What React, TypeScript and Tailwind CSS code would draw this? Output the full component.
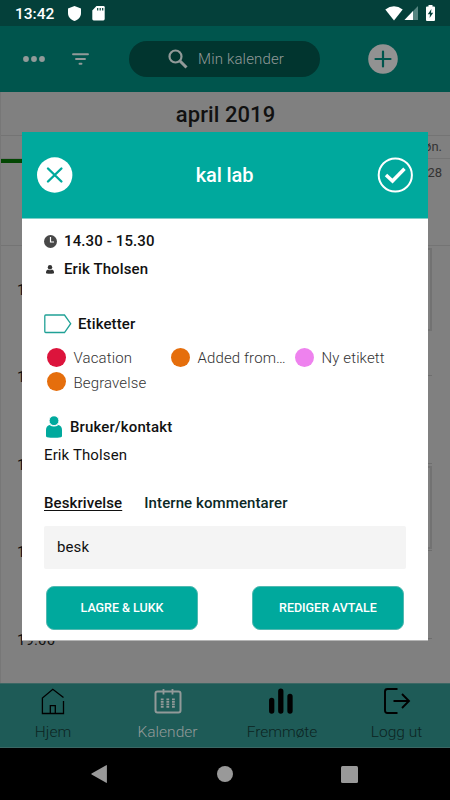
import React from "react";

const labels = [
    { name: "Vacation", color: "bg-[#dc143c]" },
    { name: "Added from…", color: "bg-[#e56e0c]" },
    { name: "Ny etikett", color: "bg-[#ee82ee]" },
    { name: "Begravelse", color: "bg-[#e56e0c]" },
];

const hours = ["15.00", "16.00", "17.00", "18.00", "19.00"];

const StatusBar = () => {
    return (
        <div className="flex h-[26px] items-center bg-[#04403a] pl-[15px] pr-[15px] text-white">
            <span className="w-[53px] text-[15.5px] font-medium leading-none pt-[3px] whitespace-nowrap">
                13:42
            </span>
            <svg width="13" height="15" viewBox="0 0 13 15" fill="currentColor">
                <path d="M6.5 0 13 2.4V7c0 3.800-2.700 6.800-6.500 8C2.700 13.800 0 10.800 0 7V2.400Z" />
            </svg>
            <svg
                className="ml-[11px]"
                width="13"
                height="15"
                viewBox="0 0 13 15"
            >
                <path
                    d="M4.500 0H11.500Q12.700 0 12.700 1.200V13Q12.700 14.400 11.300 14.400H1.700Q.3 14.400 .3 13V4.500Z"
                    fill="#fff"
                />
                <path d="M5.700 2v2.600M8.200 2v2.600M10.700 2v2.600" stroke="#04403a" strokeWidth="1.200" />
            </svg>
            <div className="ml-auto flex items-center">
                <svg width="18" height="15" viewBox="0 0 18 15" fill="currentColor">
                    <path d="M.3 3.500Q9-3 17.700 3.500L9 14.500Z" />
                </svg>
                <svg className="ml-[1px]" width="15" height="14" viewBox="0 0 15 14">
                    <path d="M14 0V14H.5Z" fill="#568580" />
                    <path d="M9 5V14H.5Z" fill="#fff" />
                </svg>
                <svg className="ml-[7px]" width="9" height="16" viewBox="0 0 9 16">
                    <path
                        d="M2.500 1.500V0h4v1.500H8q1 0 1 1V15q0 1-1 1H1q-1 0-1-1V2.500q0-1 1-1Z"
                        fill="#fff"
                    />
                    <path d="M5.400 4 1.800 9.300H4L3.600 13 7.200 7.800H5Z" fill="#04403a" />
                </svg>
            </div>
        </div>
    );
};

const TopBar = () => {
    return (
        <div className="flex h-[66px] items-center bg-[#00554d] text-[#929a99]">
            <svg className="ml-[23px]" width="22" height="6" viewBox="0 0 22 6" fill="currentColor">
                <circle cx="3" cy="3" r="2.900" />
                <circle cx="11" cy="3" r="2.900" />
                <circle cx="19" cy="3" r="2.900" />
            </svg>
            <svg
                className="ml-[27px]"
                width="17"
                height="12"
                viewBox="0 0 17 12"
                stroke="currentColor"
                strokeWidth="1.900"
                strokeLinecap="round"
            >
                <path d="M1 1.300H16M4 6H13M7.500 10.700H9.500" />
            </svg>
            <div className="ml-[40px] flex h-[36px] w-[191px] items-center rounded-full bg-[#01352f]">
                <svg
                    className="ml-[39px]"
                    width="20"
                    height="20"
                    viewBox="0 0 20 20"
                    fill="none"
                    stroke="currentColor"
                >
                    <circle cx="7.500" cy="7.500" r="6" strokeWidth="2.200" />
                    <path d="M12 12 18.500 18.500" strokeWidth="3" />
                </svg>
                <span className="ml-[10px] pt-[1px] text-[15px] font-light tracking-[0.16px] whitespace-nowrap">
                    Min kalender
                </span>
            </div>
            <svg className="ml-[48px]" width="30" height="30" viewBox="0 0 30 30">
                <circle cx="15" cy="15" r="14.800" fill="#929292" />
                <path
                    d="M15 7.500V22.500M7.500 15H22.500"
                    stroke="#00554d"
                    strokeWidth="2.200"
                    strokeLinecap="round"
                />
            </svg>
        </div>
    );
};

const CalendarView = () => {
    return (
        <div className="h-[591px] overflow-hidden border-l border-[#777] bg-[#808080] text-[#111]">
            <h1 className="h-[43px] pt-[6px] text-center text-[22px] font-medium leading-[34px] tracking-[0.08px]">
                april 2019
            </h1>
            <div className="h-[24px] border-y border-[#747474] pr-[8px] text-right text-[13px] leading-[22px] text-[#333]">
                søn.
            </div>
            <div className="h-[87px] border-b border-[#747474]">
                <div className="h-[4px] w-[60px] bg-[#034703]" />
                <div className="-mt-[1px] pr-[8px] text-right text-[13px] leading-[22px] text-[#333]">
                    28
                </div>
            </div>
            <div className="mr-[18px] ml-[16px] pt-[33.5px]">
                {hours.map((hour) => (
                    <div key={hour} className="flex h-[87.5px]">
                        <span className="h-[20px] w-[44px] text-[15px] leading-[20px] tracking-[0.1px]">
                            {hour}
                        </span>
                        <div className="relative mt-[8px] flex-1 border-t border-[#6e6e6e]">
                            {(hour === "15.00" || hour === "17.00") && (
                                <div
                                    className={
                                        hour === "15.00"
                                            ? "absolute -top-[41px] right-0 h-[83px] w-[60px] border-2 border-[#727272] bg-[#808080]"
                                            : "absolute top-[2px] right-0 h-[83px] w-[60px] border-2 border-[#727272] bg-[#808080]"
                                    }
                                />
                            )}
                        </div>
                    </div>
                ))}
            </div>
        </div>
    );
};

const TabBar = () => {
    return (
        <div className="flex h-[65px] border-y border-[#3b6764] bg-[#1e5b57] text-[15.500px] font-light leading-[20px] text-[#0c2422]">
            <div className="flex w-[106px] shrink-0 flex-col items-center">
                <svg
                    className="mt-[4px]"
                    width="24"
                    height="27"
                    viewBox="0 0 24 27"
                    fill="none"
                    stroke="#000"
                    strokeWidth="1.300"
                >
                    <path d="M22.500 9.500 11.800 1.300 1.400 10V25.500H22.500V13M9.300 25.500V17.700H14.300V25.500" />
                </svg>
                <span className="mt-[7px]">Hjem</span>
            </div>
            <div className="flex w-[123px] shrink-0 flex-col items-center text-[#929a99]">
                <svg
                    className="mt-[4px]"
                    width="28"
                    height="27"
                    viewBox="0 0 28 27"
                    fill="none"
                    stroke="currentColor"
                >
                    <rect x="1.500" y="3.500" width="25" height="21" rx="2" strokeWidth="2" />
                    <path d="M9.500 1V6.500M18.500 1V6.500" strokeWidth="1.800" />
                    <path
                        d="M8.200 10.500V19.700M13.800 10.500V19.700M19.400 10.500V19.700"
                        strokeWidth="2.800"
                        strokeDasharray="1.700 .8"
                    />
                </svg>
                <span className="mt-[7px]">Kalender</span>
            </div>
            <div className="flex w-[106px] shrink-0 flex-col items-center">
                <svg
                    className="mt-[4px]"
                    width="26"
                    height="27"
                    viewBox="0 0 26 27"
                    stroke="#000"
                    strokeWidth="5.300"
                    strokeLinecap="round"
                >
                    <path d="M2.700 12.500V23M11.800 3.200V23M21 8.500V23" />
                </svg>
                <span className="mt-[7px]">Fremmøte</span>
            </div>
            <div className="flex w-[123px] shrink-0 flex-col items-center">
                <svg
                    className="mt-[4px]"
                    width="28"
                    height="27"
                    viewBox="0 0 28 27"
                    fill="none"
                    stroke="#000"
                    strokeWidth="1.900"
                >
                    <path d="M14.500 1H4.500Q2 1 2 3.500V22.500Q2 25 4.500 25H14.500M10.500 13H26M19 6 26 13 19 20" />
                </svg>
                <span className="mt-[7px]">Logg ut</span>
            </div>
        </div>
    );
};

const SystemNav = () => {
    return (
        <div className="flex h-[52px] items-center bg-black pl-[91px] text-[#999]">
            <svg width="16" height="18" viewBox="0 0 16 18" fill="currentColor">
                <path d="M15.900 .5V17.500Q15.900 18.200 15.200 17.800L.6 9.600Q0 9 .6 8.400L15.200 .2Q15.900 -.2 15.900 .5Z" />
            </svg>
            <div className="ml-[110px] size-[16px] rounded-full bg-[#999]" />
            <div className="ml-[108px] size-[17px] rounded-[1.500px] bg-[#999]" />
        </div>
    );
};

const AppointmentModal = () => {
    return (
        <div className="absolute top-[132px] left-[22px] h-[509px] w-[406px] border-b border-[#b5b5b5] bg-white text-[15px] leading-[20px] tracking-[0.12px] text-[#111] whitespace-nowrap">
            <div className="flex h-[87px] items-center justify-between border-b border-[#7fcfc8] bg-[#00a99d] px-[15px] text-white">
                <svg width="36" height="36" viewBox="0 0 36 36">
                    <circle cx="17.700" cy="18" r="17.700" fill="#fff" />
                    <path
                        d="M11 11.500 24.400 24.500M24.400 11.500 11 24.500"
                        stroke="#00a99d"
                        strokeWidth="2.400"
                        strokeLinecap="round"
                    />
                </svg>
                <h2 className="pr-px text-[20px] font-medium tracking-[-0.1px]">kal lab</h2>
                <svg width="36" height="36" viewBox="0 0 36 36" fill="none" stroke="currentColor">
                    <circle cx="18.300" cy="18" r="16.600" strokeWidth="2" />
                    <path d="M9 18 15.500 24 27.500 11.800" strokeWidth="3.500" />
                </svg>
            </div>
            <div className="px-[22px] pt-[12px]">
                <div className="flex h-[20px] items-center font-medium">
                    <svg className="mr-[7px]" width="13" height="13" viewBox="0 0 13 13">
                        <circle cx="6.500" cy="6.500" r="6.500" fill="#484848" />
                        <path d="M6.500 2V7H10" fill="none" stroke="#fff" strokeWidth="1.200" />
                    </svg>
                    <span>14.30 - 15.30</span>
                </div>
                <div className="mt-[8px] flex h-[20px] items-center font-medium">
                    <svg
                        className="mr-[10px] ml-[2px]"
                        width="8"
                        height="9"
                        viewBox="0 0 8 9"
                        fill="#333"
                    >
                        <circle cx="4" cy="2.200" r="2.200" />
                        <path d="M2 4.500Q4 6 6 4.500Q8 5 8 7V8.300Q4 9.300 0 8.300V7Q0 5 2 4.500Z" />
                    </svg>
                    <span>Erik Tholsen</span>
                </div>
                <div className="mt-[35px] flex h-[20px] items-center font-medium">
                    <svg
                        className="mr-[6px]"
                        width="28"
                        height="20"
                        viewBox="0 0 28 20"
                        fill="none"
                        stroke="#20a196"
                        strokeWidth="1.300"
                    >
                        <path d="M1.700 1H20.500L26.700 9.700 20.500 18.500H1.700Q.8 18.500 .8 17.600V1.900Q.8 1 1.700 1Z" />
                    </svg>
                    <span>Etiketter</span>
                </div>
                <div className="mt-[11px] grid grid-cols-[124px_124px_114px] font-light">
                    {labels.map((label) => (
                        <div key={label.name} className="flex h-[24.500px] items-center pl-[3px]">
                            <span className={`mr-[7.5px] size-[19px] rounded-full ${label.color}`} />
                            <span className="pt-[2px] text-[#333]">{label.name}</span>
                        </div>
                    ))}
                </div>
                <div className="mt-[23px] flex h-[20px] items-center font-medium">
                    <svg
                        className="-mt-[1px] mr-[8px] ml-[2px]"
                        width="16"
                        height="22"
                        viewBox="0 0 16 22"
                        fill="#00a99d"
                    >
                        <path d="M3.500 9Q8 12 12.500 9Q16 10 16 14V20Q16 21 15 21.200Q8 22.500 1 21.200Q0 21 0 20V14Q0 10 3.500 9Z" />
                        <circle cx="8" cy="4.700" r="4.900" stroke="#fff" strokeWidth=".9" />
                    </svg>
                    <span>Bruker/kontakt</span>
                </div>
                <div className="mt-[8px]">Erik Tholsen</div>
                <div className="mt-[28px] flex gap-[22px] font-medium tracking-[0.1px]">
                    <span className="underline decoration-1 underline-offset-2">Beskrivelse</span>
                    <span className="text-[#0b2826]">Interne kommentarer</span>
                </div>
                <div className="mt-[13px] h-[43px] rounded-[2px] bg-[#f4f4f4] pl-[13px] leading-[43px]">
                    besk
                </div>
                <div className="mt-[17px] flex justify-between pr-[2px] pl-[2px] text-[12.500px] font-medium tracking-[-0.03px] text-white">
                    <button className="h-[44px] w-[152px] rounded-[8px] border border-[#52b9b1] bg-[#00a99d]">
                        LAGRE &amp; LUKK
                    </button>
                    <button className="h-[44px] w-[152px] rounded-[8px] border border-[#52b9b1] bg-[#00a99d]">
                        REDIGER AVTALE
                    </button>
                </div>
            </div>
        </div>
    );
};

const App = () => {
    return (
        <div className="relative h-[800px] w-[450px] overflow-hidden bg-black font-['Roboto',sans-serif]">
            <StatusBar />
            <TopBar />
            <CalendarView />
            <TabBar />
            <SystemNav />
            <AppointmentModal />
        </div>
    );
};

export default App;
